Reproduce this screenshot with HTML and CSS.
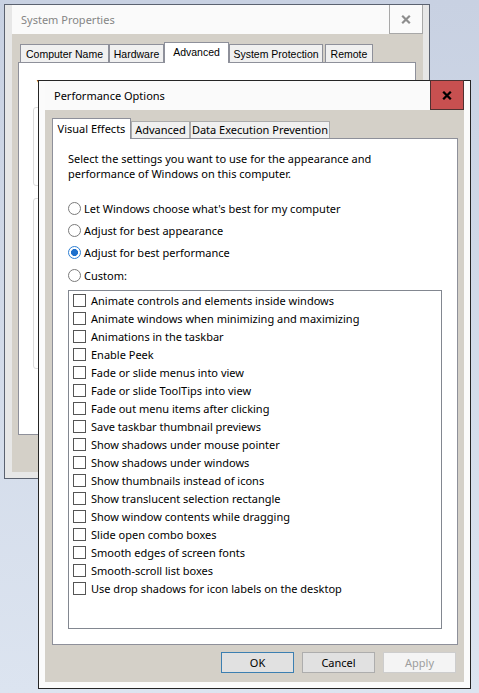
FILE: index.html
```html
<!DOCTYPE html>
<html lang="en">
<head>
<meta charset="utf-8">
<title>Performance Options</title>
<link rel="stylesheet" href="styles.css">
</head>
<body>
<div class="desk">
  <section class="win win-back">
    <header class="titlebar">
      <span class="title">System Properties</span>
      <span class="close">
        <svg width="10" height="9" viewBox="0 0 10 9"><path d="M1.2 0.8 L8.8 8.2 M8.8 0.8 L1.2 8.2" stroke="#8d8d8d" stroke-width="2.2" fill="none"/></svg>
      </span>
    </header>
    <div class="body">
      <div class="tabs back-tabs">
        <span class="btab bt-cn">Computer Name</span>
        <span class="btab bt-hw">Hardware</span>
        <span class="btab bt-adv active">Advanced</span>
        <span class="btab bt-sp">System Protection</span>
        <span class="btab bt-rm">Remote</span>
      </div>
      <div class="back-panel">
        <p class="note">You must be logged on as an Administrator to make most of these changes.</p>
        <div class="group g1"></div>
        <div class="group g2"></div>
      </div>
    </div>
  </section>

  <section class="win win-front">
    <header class="titlebar">
      <span class="title">Performance Options</span>
      <span class="close">
        <svg width="10" height="9" viewBox="0 0 10 9"><path d="M1.2 0.8 L8.8 8.2 M8.8 0.8 L1.2 8.2" stroke="#000" stroke-width="2.3" fill="none"/></svg>
      </span>
    </header>
    <div class="body front-body">
      <div class="tabs front-tabs">
        <span class="ftab ft-ve active">Visual Effects</span>
        <span class="ftab ft-adv">Advanced</span>
        <span class="ftab ft-dep">Data Execution Prevention</span>
      </div>
      <div class="panel">
        <p class="intro">Select the settings you want to use for the appearance and performance of Windows on this computer.</p>
        <div class="radios">
          <label class="radio"><span class="rdot"></span>Let Windows choose what's best for my computer</label>
          <label class="radio"><span class="rdot"></span>Adjust for best appearance</label>
          <label class="radio"><span class="rdot on"></span>Adjust for best performance</label>
          <label class="radio"><span class="rdot"></span>Custom:</label>
        </div>
        <div class="listbox">
          <div class="item"><span class="cb"></span>Animate controls and elements inside windows</div>
          <div class="item"><span class="cb"></span>Animate windows when minimizing and maximizing</div>
          <div class="item"><span class="cb"></span>Animations in the taskbar</div>
          <div class="item"><span class="cb"></span>Enable Peek</div>
          <div class="item"><span class="cb"></span>Fade or slide menus into view</div>
          <div class="item"><span class="cb"></span>Fade or slide ToolTips into view</div>
          <div class="item"><span class="cb"></span>Fade out menu items after clicking</div>
          <div class="item"><span class="cb"></span>Save taskbar thumbnail previews</div>
          <div class="item"><span class="cb"></span>Show shadows under mouse pointer</div>
          <div class="item"><span class="cb"></span>Show shadows under windows</div>
          <div class="item"><span class="cb"></span>Show thumbnails instead of icons</div>
          <div class="item"><span class="cb"></span>Show translucent selection rectangle</div>
          <div class="item"><span class="cb"></span>Show window contents while dragging</div>
          <div class="item"><span class="cb"></span>Slide open combo boxes</div>
          <div class="item"><span class="cb"></span>Smooth edges of screen fonts</div>
          <div class="item"><span class="cb"></span>Smooth-scroll list boxes</div>
          <div class="item"><span class="cb"></span>Use drop shadows for icon labels on the desktop</div>
        </div>
      </div>
      <div class="buttons">
        <button class="btn btn-default">OK</button>
        <button class="btn">Cancel</button>
        <button class="btn btn-disabled">Apply</button>
      </div>
    </div>
  </section>
</div>
</body>
</html>
```
FILE: styles.css
```css
* { box-sizing: border-box; }
html, body { margin: 0; padding: 0; }
body {
  width: 479px;
  height: 693px;
  overflow: hidden;
  background: linear-gradient(#c8d1e2, #dce4f0);
  font-family: "Noto Sans", "DejaVu Sans", sans-serif;
  font-size: 11px;
  color: #000;
}
.desk { position: relative; width: 479px; height: 693px; }

/* windows */
.win {
  position: absolute;
  display: flex;
  flex-direction: column;
  border: 1px solid #5b6270;
}
.win-back {
  left: 4px; top: 4px;
  width: 426px; height: 475px;
  background: #e7e7e7;
  padding: 0 6px 6px 7px;
}
.win-front {
  left: 38px; top: 80px;
  width: 433px; height: 609px;
  background: #fbfbfb;
  border-color: #252525;
  padding: 0 6px 6px 6px;
}
.titlebar {
  height: 29px;
  flex: none;
  display: flex;
  align-items: center;
  justify-content: space-between;
  background: #fafafa;
}
.win-back .titlebar .title { padding-left: 9px; color: #858585; font-size: 11px; }
.win-front .titlebar .title { padding-left: 9px; color: #000; }
.close {
  width: 34px;
  height: 29px;
  display: flex;
  align-items: center;
  justify-content: center;
  align-self: flex-start;
}
.win-back .close {
  border: 1px solid #a8a8a8;
  border-top: none;
  background: #fafafa;
}
.win-front .close {
  height: 30px;
  margin-top: -1px;
  background: #c75050;
  border: 1px solid #4f3131;
}
.body {
  flex: 1;
  background: #d4d0c8;
  display: flex;
  flex-direction: column;
}

/* back window contents */
.win-back .body { padding: 8px 7px 0 6px; }
.back-tabs {
  display: flex;
  align-items: flex-end;
  height: 20px;
  padding-left: 2px;
  font-family: "Liberation Sans", Arial, sans-serif;
  font-size: 10.5px;
}
.btab {
  height: 18px;
  line-height: 17px;
  padding-top: 1px;
  text-align: center;
  background: #f0f0f0;
  border: 1px solid #8e909a;
  border-bottom: none;
}
.btab.active {
  height: 21px;
  margin-bottom: -1px;
  line-height: 18px;
  padding-top: 0;
  background: #fff;
  position: relative;
  z-index: 1;
}
.bt-cn { width: 89px; }
.bt-hw { width: 55px; }
.bt-adv { width: 65px; }
.bt-sp { width: 94px; }
.bt-rm { width: 48px; margin-left: 2px; }
.back-panel {
  height: 373px;
  background: #fff;
  border: 1px solid #8e909a;
  padding: 13px 14px 0 14px;
}
.note { margin: 0 0 0 4px; line-height: 15px; white-space: nowrap; }
.group {
  border: 1px solid #dcdcdc;
  border-radius: 3px;
  width: 367px;
}
.g1 { margin-top: 16px; height: 79px; }
.g2 { margin-top: 12px; height: 171px; }

/* front window contents */
.front-body { padding: 8px 6px 9px 7px; }
.front-tabs {
  display: flex;
  align-items: flex-end;
  height: 20px;
}
.ftab {
  height: 17px;
  line-height: 16px;
  text-align: center;
  background: #f0f0f0;
  border: 1px solid #acacac;
  border-bottom: none;
  white-space: nowrap;
}
.ftab.active {
  height: 21px;
  margin-bottom: -1px;
  line-height: 19px;
  background: #fff;
  border-color: #8e909a;
  position: relative;
  z-index: 1;
}
.ft-ve { width: 79px; }
.ft-adv { width: 59px; }
.ft-dep { width: 140px; }
.panel {
  height: 507px;
  background: #fff;
  border: 1px solid #8e909a;
  padding: 12px 15px 15px 15px;
  display: flex;
  flex-direction: column;
}
.intro { margin: 0; line-height: 15px; width: 320px; }
.radios { margin-top: 16px; display: flex; flex-direction: column; }
.radio {
  height: 22.33px;
  display: flex;
  align-items: center;
  white-space: nowrap;
}
.rdot {
  width: 13px; height: 13px;
  border: 1px solid #7b7b7b;
  border-radius: 50%;
  background: #fff;
  margin-right: 3px;
  flex: none;
}
.rdot.on {
  border-color: #2f7fd3;
  background: radial-gradient(circle, #1d6fcc 0 3.2px, #fff 3.8px);
}
.listbox {
  margin-top: 4px;
  flex: 1;
  border: 1px solid #828790;
  padding: 0 0 0 4px;
}
.item {
  height: 18px;
  display: flex;
  align-items: center;
  white-space: nowrap;
}
.cb {
  width: 13px; height: 13px;
  border: 1px solid #555;
  background: #fff;
  margin-right: 5px;
  flex: none;
}
.buttons {
  margin-top: 7px;
  padding-right: 2px;
  display: flex;
  justify-content: flex-end;
  gap: 8px;
}
.btn {
  width: 73px;
  height: 21px;
  padding: 0;
  font-family: "Noto Sans", "DejaVu Sans", sans-serif;
  font-size: 11px;
  color: #000;
  background: #e1e1e1;
  border: 1px solid #adadad;
}
.btn-default { border-color: #3c7fb1; }
.btn-disabled { background: #f4f4f4; border-color: #cdcdcd; color: #9d9d9d; }
```
